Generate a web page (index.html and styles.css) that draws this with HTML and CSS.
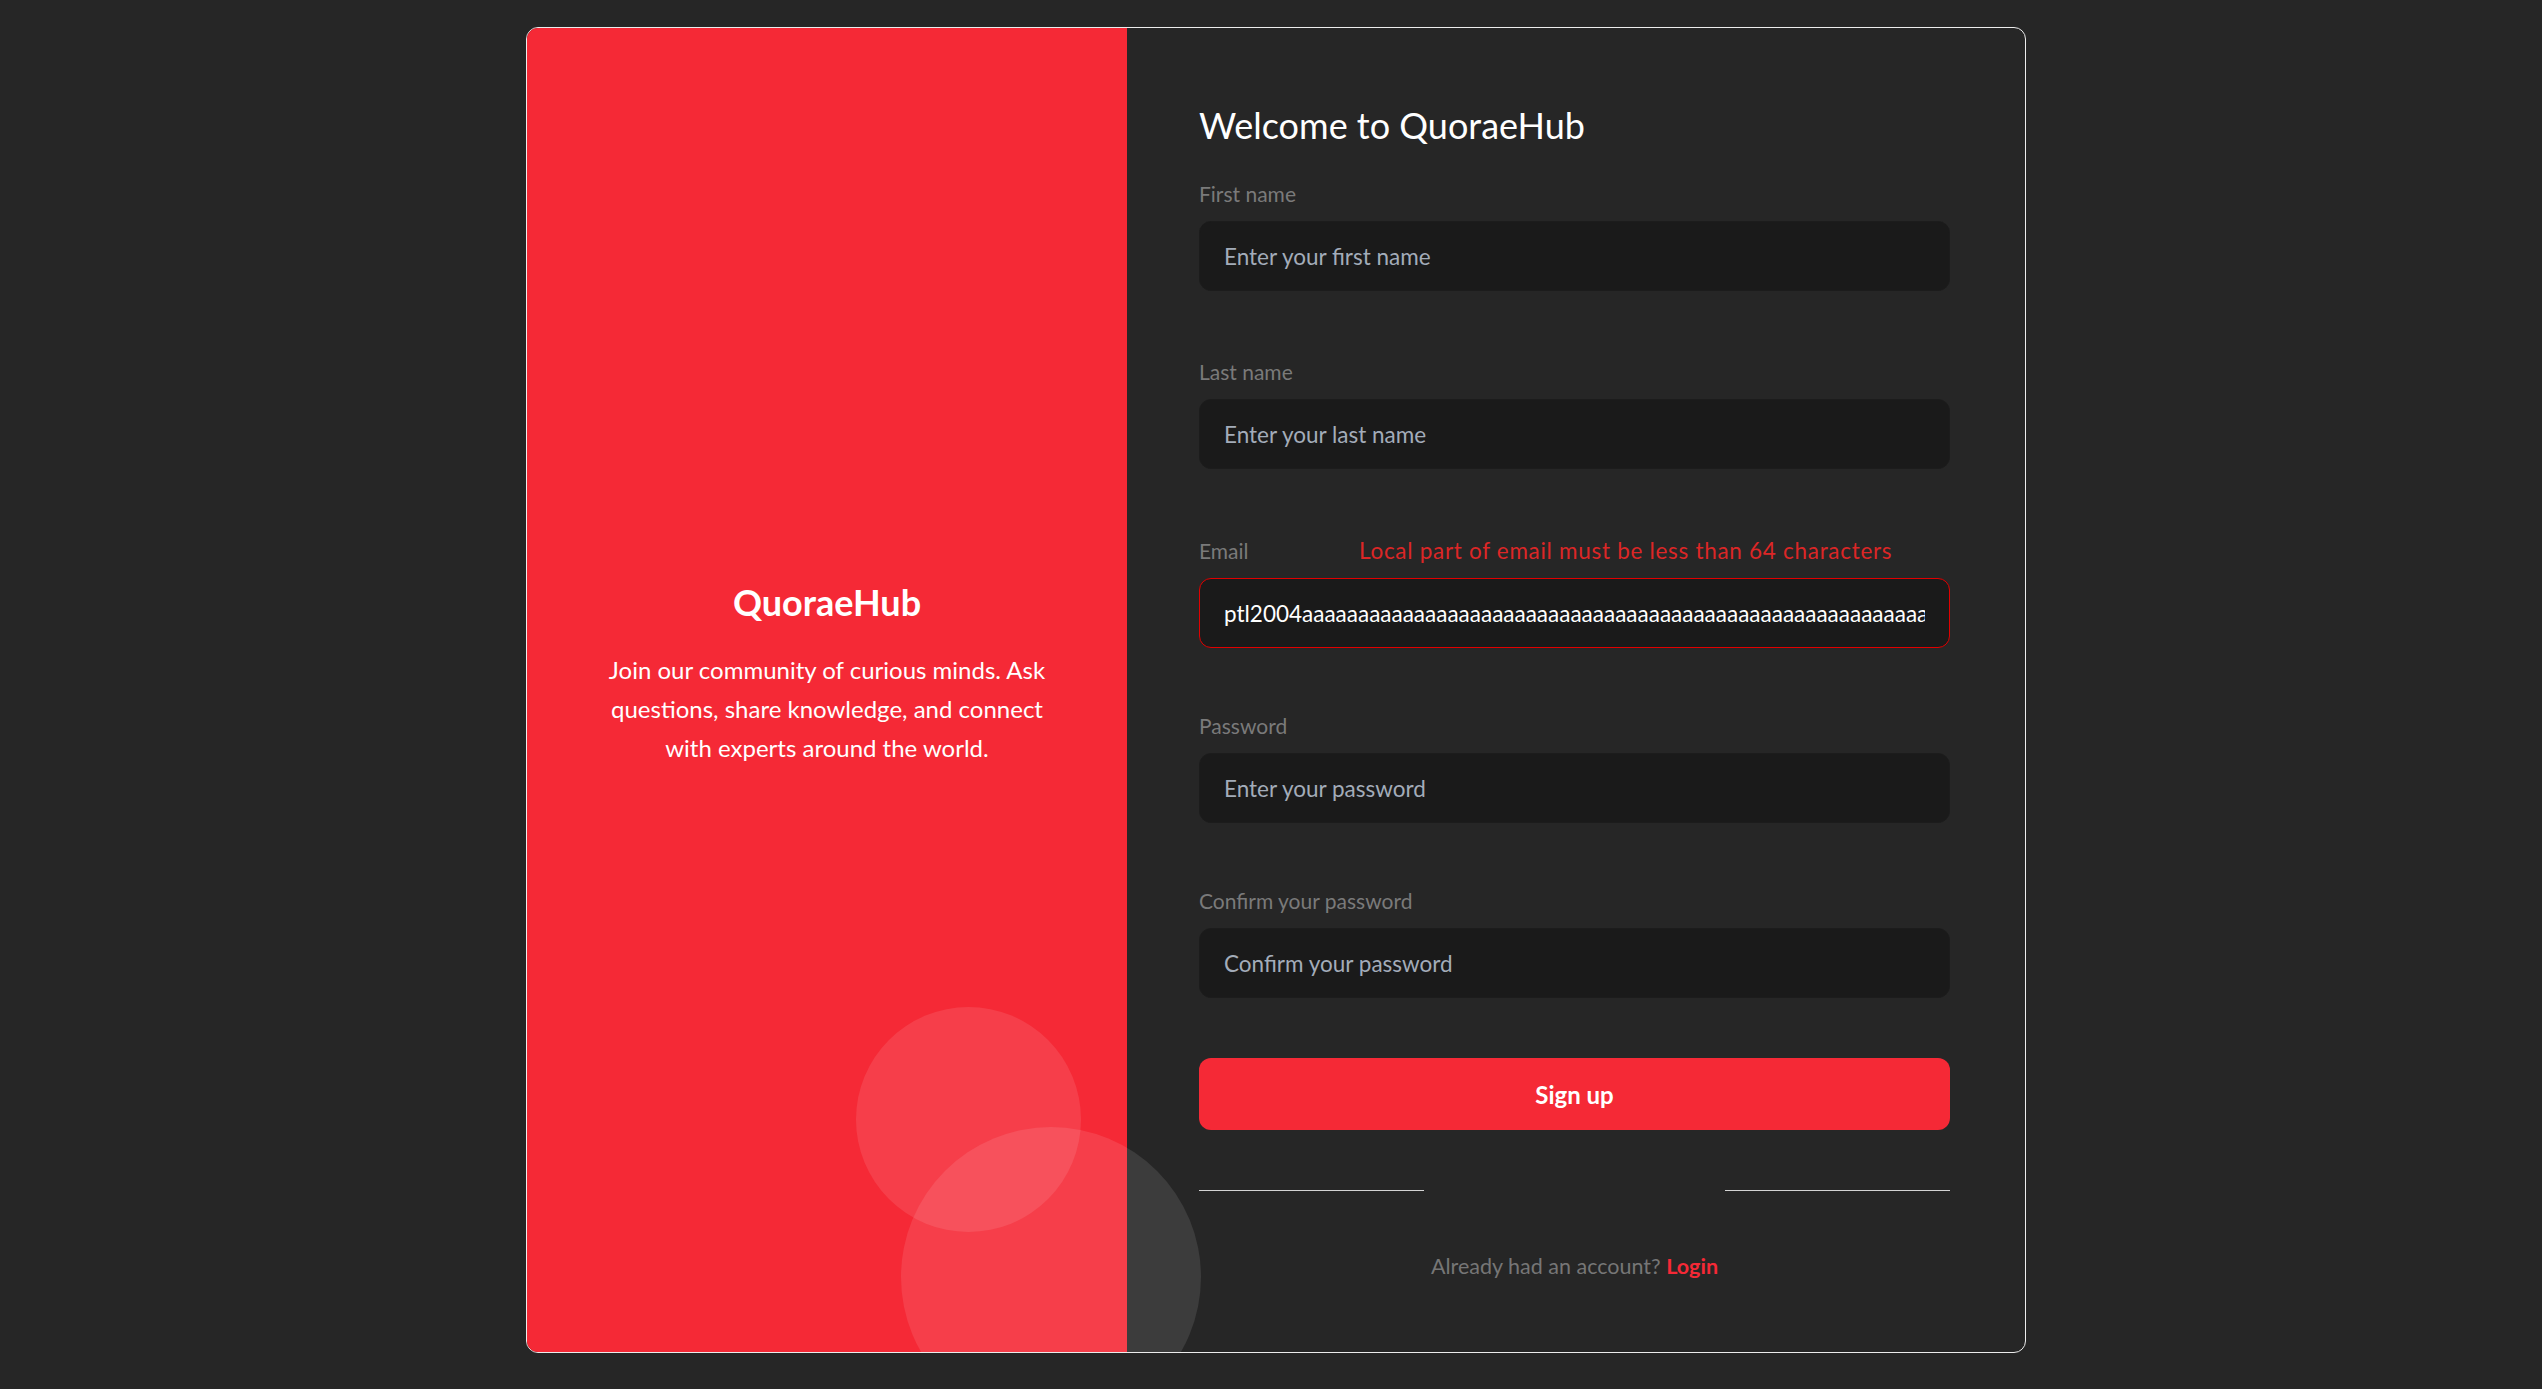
FILE: index.html
```html
<!DOCTYPE html>
<html lang="en">
<head>
<meta charset="utf-8">
<title>QuoraeHub - Sign up</title>
<link rel="stylesheet" href="styles.css">
</head>
<body>
<div class="page">
  <div class="card">
    <aside class="brand">
      <div class="brand-text">
        <h1 class="brand-title">QuoraeHub</h1>
        <p class="brand-desc">Join our community of curious minds. Ask questions, share knowledge, and connect with experts around the world.</p>
      </div>
      <span class="bubble bubble-a"></span>
      <span class="bubble bubble-b"></span>
    </aside>
    <section class="form-side">
      <h2 class="welcome">Welcome to QuoraeHub</h2>
      <form class="form">
        <div class="field field-first">
          <div class="label-row"><label class="label">First name</label></div>
          <input class="input" type="text" placeholder="Enter your first name">
        </div>
        <div class="field field-last">
          <div class="label-row"><label class="label">Last name</label></div>
          <input class="input" type="text" placeholder="Enter your last name">
        </div>
        <div class="field field-email">
          <div class="label-row label-row-error"><label class="label">Email</label><span class="error">Local part of email must be less than 64 characters</span></div>
          <input class="input input-invalid" type="text" value="ptl2004aaaaaaaaaaaaaaaaaaaaaaaaaaaaaaaaaaaaaaaaaaaaaaaaaaaaaaaaaaaaaaaaaaaaaaaa@gmail.com">
        </div>
        <div class="field field-password">
          <div class="label-row"><label class="label">Password</label></div>
          <input class="input" type="text" placeholder="Enter your password">
        </div>
        <div class="field field-confirm">
          <div class="label-row"><label class="label">Confirm your password</label></div>
          <input class="input" type="text" placeholder="Confirm your password">
        </div>
        <button class="btn" type="button">Sign up</button>
        <div class="divider"><span class="rule"></span><span class="rule"></span></div>
        <p class="switch">Already had an account? <a class="login">Login</a></p>
      </form>
    </section>
  </div>
</div>
</body>
</html>
```

FILE: styles.css
```css
* {
  box-sizing: border-box;
}

html, body {
  margin: 0;
  padding: 0;
  background: #262626;
}

body {
  font-family: "Lato", "Noto Sans", sans-serif;
  color: #ffffff;
}

.page {
  min-height: 1389px;
  display: flex;
  justify-content: center;
  align-items: flex-start;
  padding: 27px 0 0 10px;
}

.card {
  position: relative;
  width: 1500px;
  height: 1326px;
  display: flex;
  background: #262626;
  border: 1px solid #ececec;
  border-radius: 12px;
  overflow: hidden;
}

/* ---------- left brand panel ---------- */
.brand {
  position: relative;
  flex: 0 0 600px;
  background: #f52936;
  display: flex;
  flex-direction: column;
  justify-content: center;
  align-items: center;
  padding: 0 72px 35px;
  text-align: center;
}

.brand-text {
  position: relative;
  z-index: 1;
}

.brand-title {
  margin: 0 0 24px;
  font-size: 36px;
  line-height: 48px;
  font-weight: 700;
}

.brand-desc {
  margin: 0;
  font-size: 24px;
  line-height: 39px;
  font-weight: 400;
}

.bubble {
  position: absolute;
  border-radius: 50%;
  background: rgba(255, 255, 255, 0.1);
}

.bubble-a {
  width: 225px;
  height: 225px;
  right: 46px;
  bottom: 120px;
}

.bubble-b {
  width: 300px;
  height: 300px;
  right: -74px;
  bottom: -75px;
}

/* ---------- right form panel ---------- */
.form-side {
  flex: 1;
  padding: 73px 75px 0 72px;
}

.welcome {
  margin: 0 0 30px;
  font-size: 36px;
  line-height: 48px;
  font-weight: 400;
  color: #ffffff;
}

.form {
  display: flex;
  flex-direction: column;
}

.field {
  display: flex;
  flex-direction: column;
}

.field-first {
  margin-bottom: 66px;
}

.field-last {
  margin-bottom: 67px;
}

.field-email {
  margin-bottom: 63px;
}

.field-password {
  margin-bottom: 63px;
}

.field-confirm {
  margin-bottom: 60px;
}

.label-row {
  display: flex;
  align-items: baseline;
  height: 30px;
  margin-bottom: 12px;
}

.label-row-error {
  display: grid;
  grid-template-columns: 160px auto;
  align-items: end;
}

.label {
  font-size: 21px;
  line-height: 30px;
  color: #7a7a7a;
}

.error {
  font-size: 22.5px;
  line-height: 30px;
  letter-spacing: 0.7px;
  color: #dc2626;
}

.input {
  width: 100%;
  height: 70px;
  padding: 0 24px;
  background: #1a1a1a;
  border: 1px solid #1c1c1c;
  border-radius: 12px;
  font-family: "Lato", "Noto Sans", sans-serif;
  font-size: 22.5px;
  color: #ffffff;
  outline: none;
}

.input::placeholder {
  color: #a3acb9;
  opacity: 1;
}

.input-invalid {
  border-color: #e10000;
}

.btn {
  height: 72px;
  width: 100%;
  border: none;
  border-radius: 12px;
  background: #f52936;
  color: #ffffff;
  font-family: "Lato", "Noto Sans", sans-serif;
  font-size: 24px;
  font-weight: 700;
  cursor: pointer;
}

.divider {
  display: flex;
  justify-content: space-between;
  margin-top: 60px;
}

.rule {
  flex: 0 0 30%;
  height: 1px;
  background: #d4d4d4;
}

.switch {
  margin: 58px 0 0;
  text-align: center;
  font-size: 21.5px;
  line-height: 34px;
  color: #767676;
}

.login {
  color: #f52936;
  font-weight: 700;
  text-decoration: none;
}
```
